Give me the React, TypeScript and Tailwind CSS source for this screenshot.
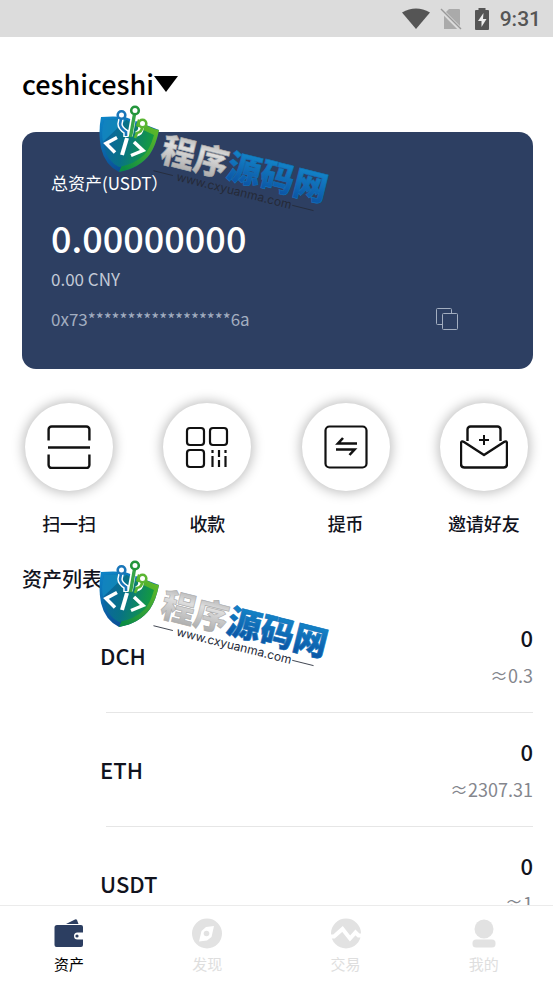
import React from 'react';

interface Asset {
    symbol: string;
    balance: string;
    value: string;
}

const assets: Asset[] = [
    { symbol: 'DCH', balance: '0', value: '≈0.3' },
    { symbol: 'ETH', balance: '0', value: '≈2307.31' },
    { symbol: 'USDT', balance: '0', value: '≈1' },
];

const ScanIcon = () => (
    <svg className="size-11" viewBox="0 0 44 44" fill="none" stroke="#111" strokeWidth="2.4" aria-hidden="true">
        <path d="M1.6 15.5V4.5a3 3 0 0 1 3-3h34.8a3 3 0 0 1 3 3V15.5" />
        <path d="M1 22.500h42" />
        <path d="M1.6 29.5V40a3 3 0 0 0 3 3h34.8a3 3 0 0 0 3-3V29.5" />
    </svg>
);

const QrIcon = () => (
    <svg className="size-11" viewBox="0 0 44 44" fill="none" stroke="#111" strokeWidth="2.2" aria-hidden="true">
        <rect x="2" y="3" width="17" height="17" rx="3" />
        <rect x="25" y="3" width="17" height="17" rx="3" />
        <rect x="2" y="25" width="17" height="17" rx="3" />
        <path d="M27.5 25v3M27.5 31v11M34 25v7M34 35v7M40.5 25v3M40.5 31v11" />
    </svg>
);

const TransferIcon = () => (
    <svg className="size-11" viewBox="0 0 44 44" fill="none" stroke="#111" aria-hidden="true">
        <rect x="1.5" y="1.5" width="41" height="41" rx="4" strokeWidth="2.2" />
        <path d="M33 18.5H14l5-5.5" strokeWidth="2.6" />
        <path d="M12 24.5h18.5l-5 5.5" strokeWidth="2.6" />
    </svg>
);

const InviteIcon = () => (
    <svg className="h-11 w-12" viewBox="0 0 48 44" fill="none" stroke="#111" strokeWidth="2.4" strokeLinejoin="round" aria-hidden="true">
        <path d="M7.5 16V4.5a3 3 0 0 1 3-3h27a3 3 0 0 1 3 3V16" />
        <path d="M24 10v10M19 15h10" strokeWidth="2" />
        <path d="M24 30L4 17q-3-2-3 2v20q0 3.500 3.500 3.500h39q3.500 0 3.500-3.500V19q0-4-3-2z" />
    </svg>
);

const actions = [
    { label: '扫一扫', icon: <ScanIcon /> },
    { label: '收款', icon: <QrIcon /> },
    { label: '提币', icon: <TransferIcon /> },
    { label: '邀请好友', icon: <InviteIcon /> },
];

const tabs = [
    {
        label: '资产',
        active: true,
        icon: (
            <svg className="size-8" viewBox="0 0 32 32" fill="#2c3e61" aria-hidden="true">
                <path d="M13 6L22 1.5q1.5-.7 2.2 1L25.5 6z" />
                <path d="M4 7h24a2 2 0 0 1 2 2v5.500h-5.500a3.500 3.500 0 0 0 0 7H30V27a2 2 0 0 1-2 2H3.500a2 2 0 0 1-2-2V9.500A2.500 2.500 0 0 1 4 7z" />
                <circle cx="24" cy="18" r="1.6" />
            </svg>
        ),
    },
    {
        label: '发现',
        active: false,
        icon: (
            <svg className="size-8" viewBox="0 0 32 32" aria-hidden="true">
                <circle cx="16" cy="15.5" r="15" fill="#e2e2e2" />
                <path d="M23 8l-2.500 11-4.500 3.500-8 1 2.500-10.500 4.500-4z" fill="#fff" />
                <circle cx="15.5" cy="15.5" r="2.8" fill="#e2e2e2" />
            </svg>
        ),
    },
    {
        label: '交易',
        active: false,
        icon: (
            <svg className="size-8" viewBox="0 0 32 32" aria-hidden="true">
                <circle cx="16" cy="15.5" r="15" fill="#e2e2e2" />
                <path d="M0 18.500h4L12.500 11l7.500 9.500 5.500-6 3 3H32" fill="none" stroke="#fff" strokeWidth="4" />
            </svg>
        ),
    },
    {
        label: '我的',
        active: false,
        icon: (
            <svg className="size-8" viewBox="0 0 32 32" fill="#e2e2e2" aria-hidden="true">
                <circle cx="16" cy="11" r="9.5" />
                <rect x="4.5" y="21.5" width="23" height="8" rx="3.5" />
            </svg>
        ),
    },
];

const StatusBar = () => (
    <div className="flex h-[37px] shrink-0 items-center justify-end bg-[#dcdcdc] pr-3 text-[#555]">
        <svg className="mr-2.5 h-6 w-7" viewBox="0 0 28 24" fill="currentColor" aria-hidden="true">
            <path d="M0 5.500q14-8 28 0L14 22z" />
        </svg>
        <svg className="mr-2.5 size-6" viewBox="0 0 24 24" aria-hidden="true">
            <path d="M9 2h10q1 0 1 1v19H4V7z" fill="#aaa" />
            <path d="M1 3l20 20" stroke="#dcdcdc" strokeWidth="4" />
            <path d="M1 2l20 20" stroke="#999" strokeWidth="1.5" />
        </svg>
        <svg className="mr-2.5 h-6 w-4" viewBox="0 0 16 24" aria-hidden="true">
            <path d="M4.500 1h7v2H14q1 0 1 1v18q0 1-1 1H2q-1 0-1-1V4q0-1 1-1h2.500z" fill="currentColor" />
            <path d="M9.500 6L4 14h3.500v6L12.500 12H9z" fill="#eee" />
        </svg>
        <span className="font-['Roboto',sans-serif] text-[21px] font-medium leading-6">9:31</span>
    </div>
);

const Brand = ({ id, className }: { id: string; className: string }) => (
    <svg className={`pointer-events-none absolute left-[90px] h-[120px] w-[250px] ${className}`} viewBox="0 0 250 120" aria-hidden="true">
        <defs>
            <linearGradient id={`${id}-left`} x1="0" y1="0" x2="0.4" y2="1">
                <stop offset="0" stopColor="#0d86c8" />
                <stop offset="1" stopColor="#0a4d94" />
            </linearGradient>
            <linearGradient id={`${id}-right`} x1="1" y1="0" x2="0.2" y2="1">
                <stop offset="0" stopColor="#6cc024" />
                <stop offset="1" stopColor="#0b8c44" />
            </linearGradient>
            <linearGradient id={`${id}-inner`} x1="0" y1="0" x2="1" y2="0.2">
                <stop offset="0" stopColor="#0b62ab" />
                <stop offset="0.5" stopColor="#087285" />
                <stop offset="1" stopColor="#139a42" />
            </linearGradient>
            <linearGradient id={`${id}-silver`} x1="0" y1="0" x2="0" y2="1">
                <stop offset="0" stopColor="#999" />
                <stop offset="0.4" stopColor="#dedede" />
                <stop offset="1" stopColor="#a0a0a0" />
            </linearGradient>
            <linearGradient id={`${id}-blue`} x1="0" y1="0" x2="0" y2="1">
                <stop offset="0" stopColor="#1593d3" />
                <stop offset="1" stopColor="#0b4b9d" />
            </linearGradient>
        </defs>
        <path d="M11 12q12-1 24 0l16 6 18 7q-3 15-9 24-10 14-31 18Q15 60 11 43 8 28 11 12z" fill={`url(#${id}-left)`} />
        <path d="M48 14q10 9 21 11-3 15-9 24-10 14-31 18l5-12z" fill={`url(#${id}-right)`} />
        <path d="M14 15q12-1 23 0l12 8 15 7q-4 14-10 20-9 9-25 12Q17 56 14 42 11 28 14 15z" fill={`url(#${id}-inner)`} />
        <path d="M14 15q12-1 22 0L13 37Q11 27 14 15z" fill="#1597ce" opacity="0.6" />
        <path d="M31 14l-1 5q0 4 6 8v5M44 9l-4 22M51 22q0 6-5 7" fill="none" stroke="#fff" strokeWidth="5.5" />
        <g fill="none" strokeWidth="2.6">
            <path d="M31 14l-1 5q0 4 6 8v4" stroke="#1976b9" />
            <circle cx="31.5" cy="10" r="3.8" stroke="#1976b9" fill="#fff" />
            <path d="M44.500 9l-4 23" stroke="#35a448" strokeWidth="3.4" />
            <circle cx="45" cy="5.5" r="3.8" stroke="#23953b" fill="#fff" />
            <path d="M52 22q0 5-5 6l-2 5" stroke="#5ab532" />
            <circle cx="52.5" cy="18.5" r="3.8" stroke="#5ab532" fill="#fff" />
        </g>
        <g fill="none" stroke="#fff">
            <path d="M27 32.500l-11 6 9 9" strokeWidth="3.5" />
            <path d="M37 33l-5 17" strokeWidth="4" />
            <path d="M44 37l9 8.500-12 5" strokeWidth="3.5" />
        </g>
        <g transform="rotate(14 70 56)">
            <text x="69" y="56" fontSize="34" fontWeight="900" className="font-['Noto_Sans_CJK_SC',sans-serif]" fill={`url(#${id}-silver)`} stroke="#aaa" strokeWidth="0.6">
                程序<tspan fill={`url(#${id}-blue)`} stroke="#1170b8">源码网</tspan>
            </text>
            <path d="M66 67h20M209 67h22" stroke="#252a38" strokeWidth="0.8" />
            <text x="90" y="71" fontSize="12" className="font-['Inter',sans-serif]" fill="#252a38">www.cxyuanma.com</text>
        </g>
    </svg>
);

const AssetCard = () => (
    <section className="ml-[22px] mr-5 mt-7 h-[237px] rounded-[14px] bg-[#2d3f62] px-[29px] pt-[39px] text-white">
        <h2 className="text-[17px] leading-6">总资产(USDT）</h2>
        <div className="mt-[18px] text-4xl font-medium leading-12">0.00000000</div>
        <div className="mt-1.5 text-[17px] leading-6 text-[#c3cad7]">0.00 CNY</div>
        <div className="mt-4 flex items-center justify-between pr-[45px] text-[#a3aec0]">
            <span className="text-[17px] leading-6">0x73******************6a</span>
            <button type="button" aria-label="复制地址">
                <svg className="size-6" viewBox="0 0 24 24" fill="none" stroke="currentColor" aria-hidden="true">
                    <path d="M7 17.500H2.500q-1 0-1-1v-14q0-1 1-1h13q1 0 1 1V6" />
                    <rect x="7.5" y="6.5" width="15" height="16" rx="1" />
                </svg>
            </button>
        </div>
    </section>
);

export default function App() {
    return (
        <div className="relative flex h-screen flex-col overflow-hidden bg-white font-['Noto_Sans_CJK_SC',sans-serif] text-[#11131d]">
            <StatusBar />
            <main className="min-h-0 flex-1 overflow-y-auto [scrollbar-width:none]">
                <header className="mt-[27px] px-[22px]">
                    <button type="button" className="flex items-center text-[27px] font-medium leading-10 text-black">
                        ceshiceshi
                        <svg className="h-4 w-6" viewBox="0 0 24 16" aria-hidden="true">
                            <path d="M0 0h24L12 16z" />
                        </svg>
                    </button>
                </header>
                <AssetCard />
                <nav className="mt-[34px] grid grid-cols-4">
                    {actions.map(action => (
                        <button key={action.label} type="button" className="flex flex-col items-center">
                            <span className="flex size-[88px] items-center justify-center rounded-full bg-white shadow-[0_0_12px_2px_rgba(0,0,0,0.25)]">
                                {action.icon}
                            </span>
                            <span className="mt-5 text-lg font-medium leading-6">{action.label}</span>
                        </button>
                    ))}
                </nav>
                <section className="mt-7">
                    <h2 className="px-[22px] text-xl font-medium leading-8">资产列表</h2>
                    <ul className="mt-1 pr-5 pl-[100px]">
                        {assets.map(asset => (
                            <li key={asset.symbol} className="relative flex h-[114px] items-center justify-between pb-0.5 after:absolute after:right-0 after:bottom-0 after:left-1.5 after:h-px after:bg-[#e6e6e6]">
                                <span className="text-[22px] font-medium leading-8">{asset.symbol}</span>
                                <div className="text-right">
                                    <div className="text-[22px] font-medium leading-8">{asset.balance}</div>
                                    <div className="mt-2 text-lg leading-7 text-[#84868d]">{asset.value}</div>
                                </div>
                            </li>
                        ))}
                    </ul>
                </section>
            </main>
            <nav className="grid h-[78px] shrink-0 grid-cols-4 border-t border-[#ebebeb] bg-white">
                {tabs.map(tab => (
                    <button key={tab.label} type="button" className={`flex flex-col items-center pt-3 text-[15px] leading-6 ${tab.active ? 'text-black' : 'text-[#dedede]'}`}>
                        {tab.icon}
                        <span className="mt-0.5">{tab.label}</span>
                    </button>
                ))}
            </nav>
            <Brand id="brand-top" className="top-[105px]" />
            <Brand id="brand-list" className="top-[560px]" />
        </div>
    );
}
